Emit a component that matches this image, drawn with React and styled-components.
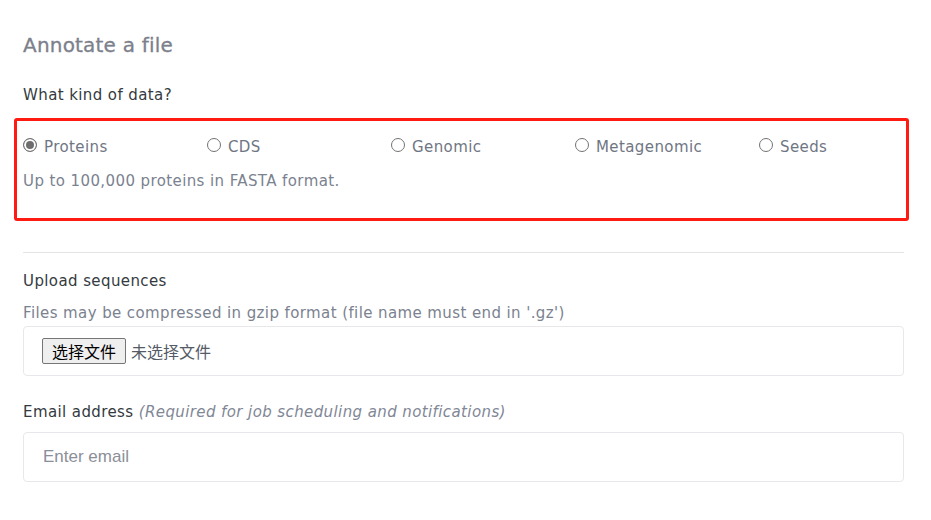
import React, { useState } from 'react'
import styled, { createGlobalStyle } from 'styled-components'

const GlobalStyle = createGlobalStyle`
  * { box-sizing: border-box; }
  body {
    margin: 0;
    background: #fff;
    font-family: "DejaVu Sans", "Noto Sans CJK SC", sans-serif;
  }
`;

const kinds = [
  { id: 'proteins', label: 'Proteins', help: 'Up to 100,000 proteins in FASTA format.' },
  { id: 'cds', label: 'CDS', help: 'Up to 100,000 CDS in FASTA format.' },
  { id: 'genomic', label: 'Genomic', help: 'A genome assembly in FASTA format.' },
  { id: 'meta', label: 'Metagenomic', help: 'A metagenome assembly in FASTA format.' },
  { id: 'seeds', label: 'Seeds', help: 'A list of seed orthologs.' },
];

const App = () => {
  const [kind, setKind] = useState('proteins');
  const current = kinds.find((k) => k.id === kind);

  return (
    <Wrap>
      <GlobalStyle />
      <Title>Annotate a file</Title>
      <Label>What kind of data?</Label>
      <Highlight>
        <RadioRow>
          {kinds.map((k) => (
            <RadioItem key={k.id} onClick={() => setKind(k.id)}>
              <RadioDot checked={kind === k.id} />
              <RadioText>{k.label}</RadioText>
            </RadioItem>
          ))}
        </RadioRow>
        <Help>{current.help}</Help>
      </Highlight>
      <Divider />
      <Label>Upload sequences</Label>
      <Help>Files may be compressed in gzip format (file name must end in '.gz')</Help>
      <FileBox>
        <FileButton type="button">选择文件</FileButton>
        <FileName>未选择文件</FileName>
      </FileBox>
      <Label>
        Email address <Note>(Required for job scheduling and notifications)</Note>
      </Label>
      <EmailInput placeholder="Enter email" />
    </Wrap>
  );
};

const Wrap = styled.div`
  width: 881px;
  margin: 0 0 0 23px;
  padding-top: 31px;
`;

const Title = styled.h2`
  margin: 0 0 24px;
  font-size: 20px;
  font-weight: 400;
  color: #7c808b;
  line-height: 28px;
  letter-spacing: 0.2px;
  -webkit-text-stroke: 0.3px #7c808b;
`;

const Label = styled.div`
  font-size: 15px;
  letter-spacing: 0.4px;
  color: #343a40;
  line-height: 24px;
  margin-bottom: 8px;
`;

const Note = styled.span`
  font-style: italic;
  color: #7f8796;
`;

const Highlight = styled.div`
  margin: 11px -5px 0 -9px;
  border: 3px solid #ff1a12;
  border-radius: 3px;
  padding: 15px 6px 21px 6px;
`;

const RadioRow = styled.div`
  display: grid;
  grid-template-columns: repeat(5, 184px);
  margin-bottom: 11px;
`;

const RadioItem = styled.label`
  display: flex;
  align-items: center;
  gap: 7px;
  cursor: pointer;
`;

const RadioDot = styled.span`
  width: 14px;
  height: 14px;
  border-radius: 50%;
  border: 1px solid #737373;
  margin-top: -4px;
  background: ${(p) => (p.checked ? '#6e6e6e' : '#fff')};
  box-shadow: ${(p) => (p.checked ? 'inset 0 0 0 2px #fff' : 'none')};
  flex-shrink: 0;
`;

const RadioText = styled.span`
  font-size: 15px;
  letter-spacing: 0.4px;
  color: #6f7683;
  line-height: 22px;
`;

const Help = styled.div`
  font-size: 15px;
  letter-spacing: 0.4px;
  color: #7b828f;
  line-height: 24px;
  margin-bottom: 4px;
`;

const Divider = styled.hr`
  border: 0;
  border-top: 1px solid #e3e3e6;
  margin: 31px 0 16px;
`;

const FileBox = styled.div`
  height: 50px;
  border: 1px solid #e8e8ec;
  border-radius: 4px;
  display: flex;
  align-items: center;
  padding: 0 18px;
  margin-top: -3px;
  margin-bottom: 24px;
`;

const FileButton = styled.button`
  font-family: "Noto Sans CJK SC", sans-serif;
  font-size: 16px;
  height: 26px;
  padding: 0 9px;
  border: 1px solid #767676;
  border-radius: 2px;
  background: #efefef;
  color: #000;
  line-height: 1;
`;

const FileName = styled.span`
  font-family: "Noto Sans CJK SC", sans-serif;
  font-size: 16px;
  color: #555b66;
  margin-left: 5px;
`;

const EmailInput = styled.input`
  display: block;
  width: 100%;
  height: 50px;
  border: 1px solid #e8e8ec;
  border-radius: 4px;
  padding: 0 19px;
  font-family: "Liberation Sans Narrow", "Liberation Sans", sans-serif;
  font-size: 17px;
  outline: none;
  margin-top: 4px;
  &::placeholder {
    color: #8b8f98;
  }
`;

export default App;
